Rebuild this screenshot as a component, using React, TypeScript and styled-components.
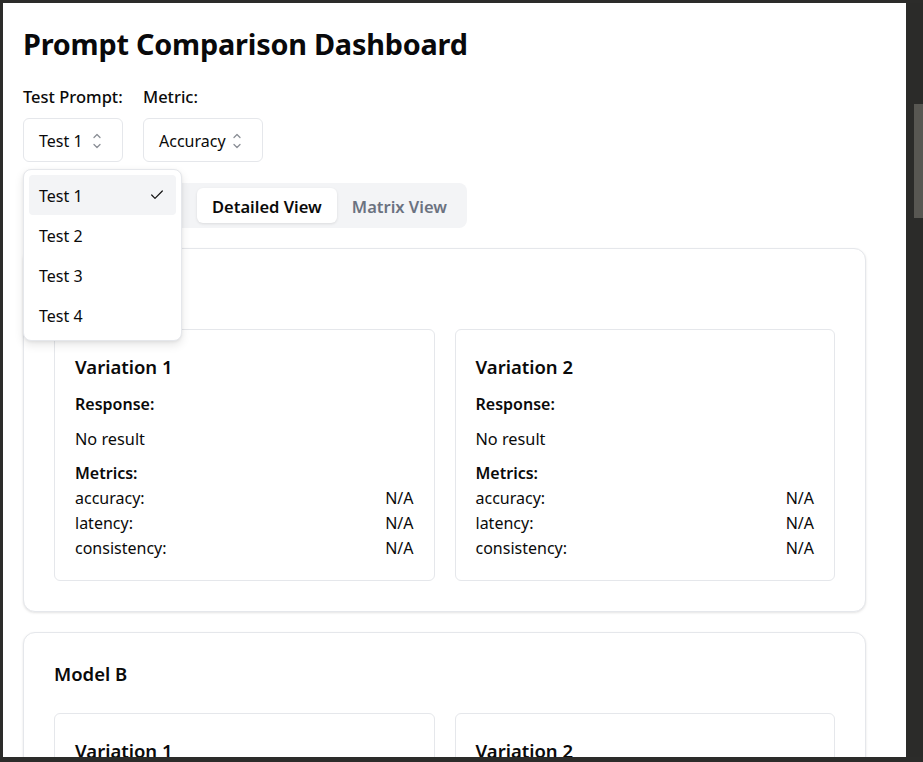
import React from "react";
import styled, { createGlobalStyle, css } from "styled-components";
import { Check } from "lucide-react";

const GlobalStyle = createGlobalStyle`
  html, body { margin: 0; padding: 0; }
  body {
    font-family: "Noto Sans", "Open Sans", sans-serif;
    background: #2c2c2a;
    color: #0a0a0a;
  }
  * { box-sizing: border-box; }
`;

const Frame = styled.div`
  width: 923px;
  height: 762px;
  overflow: hidden;
  display: grid;
  grid-template-columns: 1fr 17px;
  padding: 3px 0 5px 3px;
  background: #2c2c2a;
`;

const Viewport = styled.div`
  background: #ffffff;
  overflow: hidden;
  padding: 23px 0 0 20px;
`;

const ScrollTrack = styled.div`
  display: flex;
  justify-content: flex-end;
  align-items: flex-start;
  padding-top: 101px;
  background: #2b2b29;
`;

const ScrollThumb = styled.div`
  width: 9px;
  height: 114px;
  background: #585752;
`;

const Main = styled.main`
  width: 843px;
  display: flex;
  flex-direction: column;
`;

const Title = styled.h1`
  margin: 0 0 23px;
  font-size: 28.8px;
  line-height: 36px;
  font-weight: 700;
  color: #09090b;
  letter-spacing: -0.2px;
`;

const Controls = styled.div`
  display: flex;
  gap: 20px;
  margin-bottom: 21px;
`;

const ControlGroup = styled.div`
  display: flex;
  flex-direction: column;
  position: relative;
`;

const Label = styled.label`
  font-size: 16.5px;
  line-height: 24px;
  font-weight: 500;
  margin-bottom: 9px;
`;

const SelectButton = styled.button<{ $width: number }>`
  width: ${(p) => p.$width}px;
  height: 44px;
  display: flex;
  align-items: center;
  justify-content: space-between;
  padding: 2px 17px 0 15px;
  border: 1px solid #e5e7eb;
  border-radius: 6px;
  background: #ffffff;
  font-family: inherit;
  font-size: 16px;
  color: #0a0a0a;
`;

const Menu = styled.div`
  position: absolute;
  top: calc(100% + 7px);
  left: 0;
  width: 159px;
  padding: 5px;
  background: #ffffff;
  border: 1px solid #e5e7eb;
  border-radius: 8px;
  box-shadow: 0 4px 10px rgba(0, 0, 0, 0.1), 0 1px 3px rgba(0, 0, 0, 0.06);
  z-index: 10;
`;

const MenuItem = styled.div<{ $active?: boolean }>`
  position: relative;
  height: 40px;
  display: flex;
  align-items: center;
  padding: 2px 10px 0;
  border-radius: 4px;
  font-size: 16px;
  color: #0a0a0a;
  ${(p) =>
    p.$active &&
    css`
      background: #f3f4f6;
    `}
`;

const CheckMark = styled.span`
  position: absolute;
  right: 11px;
  top: 12px;
  display: flex;
  color: #111;
`;

const TabList = styled.div`
  display: inline-flex;
  align-self: flex-start;
  height: 45px;
  padding: 5px;
  background: #f3f4f6;
  border-radius: 8px;
  margin-bottom: 20px;
`;

const Tab = styled.button<{ $active?: boolean; $minWidth?: number }>`
  height: 35px;
  min-width: ${(p) => (p.$minWidth ? `${p.$minWidth}px` : "0")};
  padding: 1px 15px 0;
  border: none;
  border-radius: 6px;
  background: transparent;
  font-family: inherit;
  font-size: 16.5px;
  font-weight: 600;
  color: #6b7280;
  ${(p) =>
    p.$active &&
    css`
      background: #ffffff;
      color: #0a0a0a;
      box-shadow: 0 1px 3px rgba(0, 0, 0, 0.1);
    `}
`;

const ModelList = styled.div`
  display: flex;
  flex-direction: column;
  gap: 20px;
`;

const ModelCard = styled.section`
  border: 1px solid #e5e7eb;
  border-radius: 12px;
  padding: 30px;
  background: #ffffff;
  box-shadow: 0 1px 3px rgba(0, 0, 0, 0.08), 0 1px 2px rgba(0, 0, 0, 0.04);
`;

const ModelTitle = styled.h2`
  margin: 0 0 28px;
  font-size: 18.5px;
  line-height: 22px;
  font-weight: 600;
`;

const VariationGrid = styled.div`
  display: grid;
  grid-template-columns: 1fr 1fr;
  gap: 20px;
`;

const VariationCard = styled.div`
  border: 1px solid #e5e7eb;
  border-radius: 6px;
  padding: 21px 20px 19px;
`;

const VariationTitle = styled.h3`
  margin: 0 0 10px;
  font-size: 18.5px;
  line-height: 31px;
  font-weight: 600;
`;

const SectionLabel = styled.div<{ $gap?: number }>`
  font-size: 16px;
  line-height: 25px;
  font-weight: 600;
  margin-bottom: ${(p) => p.$gap ?? 0}px;
`;

const BodyText = styled.p`
  margin: 0 0 9px;
  font-size: 16.3px;
  line-height: 25px;
`;

const MetricRow = styled.div`
  display: flex;
  justify-content: space-between;
  font-size: 16px;
  line-height: 25px;
`;

const ChevronsIcon = () => (
  <svg width="16" height="18" viewBox="0 0 16 18" fill="none" stroke="#8b8f96" strokeWidth="1.3" strokeLinecap="round" strokeLinejoin="round">
    <path d="M5 5.5 L8 2.5 L11 5.5" />
    <path d="M5 12.5 L8 15.5 L11 12.5" />
  </svg>
);

const metrics = ["accuracy", "latency", "consistency"];
const models = ["Model A", "Model B"];
const variations = ["Variation 1", "Variation 2"];
const tests = ["Test 1", "Test 2", "Test 3", "Test 4"];

export default function App() {
  return (
    <>
      <GlobalStyle />
      <Frame>
        <Viewport>
          <Main>
            <Title>Prompt Comparison Dashboard</Title>
            <Controls>
              <ControlGroup>
                <Label>Test Prompt:</Label>
                <SelectButton $width={100}>
                  <span>Test 1</span>
                  <ChevronsIcon />
                </SelectButton>
                <Menu>
                  {tests.map((t, i) => (
                    <MenuItem key={t} $active={i === 0}>
                      {t}
                      {i === 0 && (
                        <CheckMark>
                          <Check size={16} strokeWidth={1.8} />
                        </CheckMark>
                      )}
                    </MenuItem>
                  ))}
                </Menu>
              </ControlGroup>
              <ControlGroup>
                <Label>Metric:</Label>
                <SelectButton $width={120}>
                  <span>Accuracy</span>
                  <ChevronsIcon />
                </SelectButton>
              </ControlGroup>
            </Controls>
            <TabList>
              <Tab $minWidth={169}>Summary View</Tab>
              <Tab $active>Detailed View</Tab>
              <Tab>Matrix View</Tab>
            </TabList>
            <ModelList>
              {models.map((m) => (
                <ModelCard key={m}>
                  <ModelTitle>{m}</ModelTitle>
                  <VariationGrid>
                    {variations.map((v) => (
                      <VariationCard key={v}>
                        <VariationTitle>{v}</VariationTitle>
                        <SectionLabel $gap={10}>Response:</SectionLabel>
                        <BodyText>No result</BodyText>
                        <SectionLabel>Metrics:</SectionLabel>
                        {metrics.map((k) => (
                          <MetricRow key={k}>
                            <span>{k}:</span>
                            <span>N/A</span>
                          </MetricRow>
                        ))}
                      </VariationCard>
                    ))}
                  </VariationGrid>
                </ModelCard>
              ))}
            </ModelList>
          </Main>
        </Viewport>
        <ScrollTrack>
          <ScrollThumb />
        </ScrollTrack>
      </Frame>
    </>
  );
}
